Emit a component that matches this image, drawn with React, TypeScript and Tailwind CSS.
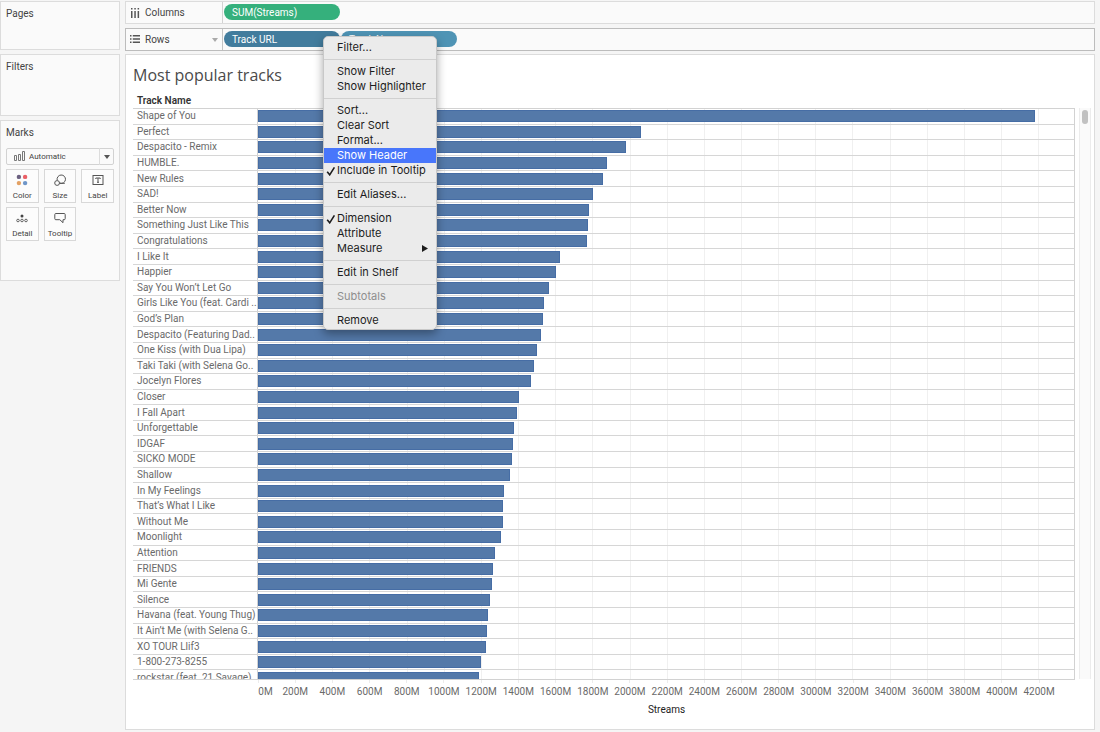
import React, { useState } from 'react';

const tracks = [
  { name: 'Shape of You', streams: 4182 },
  { name: 'Perfect', streams: 2060 },
  { name: 'Despacito - Remix', streams: 1980 },
  { name: 'HUMBLE.', streams: 1877 },
  { name: 'New Rules', streams: 1858 },
  { name: 'SAD!', streams: 1803 },
  { name: 'Better Now', streams: 1783 },
  { name: 'Something Just Like This', streams: 1778 },
  { name: 'Congratulations', streams: 1770 },
  { name: 'I Like It', streams: 1627 },
  { name: 'Happier', streams: 1606 },
  { name: 'Say You Won’t Let Go', streams: 1568 },
  { name: 'Girls Like You (feat. Cardi ..', streams: 1539 },
  { name: 'God’s Plan', streams: 1535 },
  { name: 'Despacito (Featuring Dad..', streams: 1522 },
  { name: 'One Kiss (with Dua Lipa)', streams: 1501 },
  { name: 'Taki Taki (with Selena Go..', streams: 1485 },
  { name: 'Jocelyn Flores', streams: 1468 },
  { name: 'Closer', streams: 1404 },
  { name: 'I Fall Apart', streams: 1393 },
  { name: 'Unforgettable', streams: 1377 },
  { name: 'IDGAF', streams: 1372 },
  { name: 'SICKO MODE', streams: 1366 },
  { name: 'Shallow', streams: 1356 },
  { name: 'In My Feelings', streams: 1326 },
  { name: 'That’s What I Like', streams: 1321 },
  { name: 'Without Me', streams: 1318 },
  { name: 'Moonlight', streams: 1307 },
  { name: 'Attention', streams: 1275 },
  { name: 'FRIENDS', streams: 1267 },
  { name: 'Mi Gente', streams: 1259 },
  { name: 'Silence', streams: 1251 },
  { name: 'Havana (feat. Young Thug)', streams: 1237 },
  { name: 'It Ain’t Me (with Selena G..', streams: 1234 },
  { name: 'XO TOUR Llif3', streams: 1229 },
  { name: '1-800-273-8255', streams: 1202 },
  { name: 'rockstar (feat. 21 Savage)', streams: 1191 },
];

// axis range in millions
const AXIS_MAX = 4393;
const ticks = Array.from({ length: 22 }, (_, i) => i * 200);
const pct = (value: number) => `${(value / AXIS_MAX) * 100}%`;

type MenuEntry = { label: string; checked?: boolean; disabled?: boolean; submenu?: boolean };

const menuGroups: MenuEntry[][] = [
  [{ label: 'Filter...' }],
  [{ label: 'Show Filter' }, { label: 'Show Highlighter' }],
  [
    { label: 'Sort...' },
    { label: 'Clear Sort' },
    { label: 'Format...' },
    { label: 'Show Header' },
    { label: 'Include in Tooltip', checked: true },
  ],
  [{ label: 'Edit Aliases...' }],
  [{ label: 'Dimension', checked: true }, { label: 'Attribute' }, { label: 'Measure', submenu: true }],
  [{ label: 'Edit in Shelf' }],
  [{ label: 'Subtotals', disabled: true }],
  [{ label: 'Remove' }],
];

const ContextMenu = () => {
  const [active, setActive] = useState('Show Header');

  return (
    <div
      role="menu"
      className="absolute left-[99px] top-[5px] z-20 w-[114px] rounded-[5px] border border-[#c8c8c8] bg-[#ebebeb] pt-[3px] pb-px font-['Inter',sans-serif] text-[11px] shadow-[0_4px_10px_rgba(0,0,0,0.35)]"
    >
      {menuGroups.map((group, i) => (
        <div key={i}>
          {i > 0 && <div className="my-[4px] h-px bg-[#d0d0d0]" />}
          {group.map((item) => (
            <button
              key={item.label}
              role="menuitem"
              disabled={item.disabled}
              onMouseEnter={() => setActive(item.label)}
              className={`flex h-[15px] w-full items-center pr-[8px] text-left whitespace-nowrap ${
                item.disabled ? 'text-[#8e8e8e]' : active === item.label ? 'bg-[#4876fb] text-white' : 'text-[#1c1c1c]'
              }`}
            >
              <span className="flex w-[13px] shrink-0 justify-center">
                {item.checked && (
                  <svg viewBox="0 0 10 10" className="h-[10px] w-[10px]" fill="none" stroke="currentColor" strokeWidth="1.6">
                    <path d="M1.2 5.8 3.7 8.8 8.4 1.3" />
                  </svg>
                )}
              </span>
              <span className="flex-1">{item.label}</span>
              {item.submenu && (
                <svg viewBox="0 0 6 7" className="h-[7px] w-[6px]" fill="currentColor">
                  <path d="M0 0 6 3.5 0 7z" />
                </svg>
              )}
            </button>
          ))}
        </div>
      ))}
    </div>
  );
};

const ColumnsIcon = () => (
  <svg viewBox="0 0 10 10" className="h-[10px] w-[10px]" fill="#555">
    <path d="M1 0h1.5v1.5H1zM1 3h1.5v7H1zM4.3 0h1.5v1.5H4.3zM4.3 3h1.5v7H4.3zM7.6 0h1.5v1.5H7.6zM7.6 3h1.5v7H7.6z" />
  </svg>
);

const RowsIcon = () => (
  <svg viewBox="0 0 10 10" className="h-[10px] w-[10px]" fill="#555">
    <path d="M0 0h1.5v1.5H0zM2.8 0H10v1.5H2.8zM0 3.2h1.5v1.5H0zM2.8 3.2H10v1.5H2.8zM0 6.4h1.5v1.5H0zM2.8 6.4H10v1.5H2.8z" />
  </svg>
);

const markButtons = [
  {
    label: 'Color',
    icon: (
      <>
        <circle cx="4.9" cy="4.9" r="2.2" fill="#6b6080" />
        <circle cx="11.1" cy="4.9" r="2.2" fill="#ea5f66" />
        <circle cx="4.9" cy="11.1" r="2.2" fill="#e3a164" />
        <circle cx="11.1" cy="11.1" r="2.2" fill="#6f96c8" />
      </>
    ),
  },
  {
    label: 'Size',
    icon: (
      <g fill="none" stroke="#555">
        <path d="M5.2 8.2A4.2 4.2 0 1 1 8 11.2" />
        <path d="M7.6 11.3h5.2" />
        <circle cx="5.1" cy="11" r="2.4" />
      </g>
    ),
  },
  {
    label: 'Label',
    icon: (
      <g fill="none" stroke="#555">
        <rect x="3" y="3.5" width="10" height="9" />
        <path d="M5.8 7V6h4.4v1M8 6v4.2M7 10.3h2" />
      </g>
    ),
  },
  {
    label: 'Detail',
    icon: (
      <>
        <circle cx="8" cy="6" r="1.5" fill="#444" />
        <g fill="none" stroke="#555" strokeWidth="0.9">
          <circle cx="4" cy="10.5" r="1.3" />
          <circle cx="8" cy="10.5" r="1.3" />
          <circle cx="12" cy="10.5" r="1.3" />
        </g>
      </>
    ),
  },
  {
    label: 'Tooltip',
    icon: (
      <path
        d="M3.8 3.5h8.4q1 0 1 1v4.2q0 1-1 1H11v3L7.8 9.7h-4q-1 0-1-1V4.5q0-1 1-1z"
        fill="none"
        stroke="#555"
      />
    ),
  },
];

const Sidebar = () => (
  <aside className="flex w-[120px] shrink-0 flex-col text-[10px] leading-[14px]">
    <section className="h-[49px] border border-[#dcdcdc] bg-[#fafafa] px-[5px] py-[5px]">Pages</section>
    <section className="mt-[4px] h-[62px] border border-[#dcdcdc] bg-[#fafafa] px-[5px] py-[5px]">Filters</section>
    <section className="mt-[4px] h-[161px] border border-[#dcdcdc] bg-[#fafafa] px-[5px] py-[5px]">
      <h2>Marks</h2>
      <div className="relative mt-[8px]">
        <select
          aria-label="Mark type"
          className="block h-[17px] w-full appearance-none rounded-[2px] border border-[#d2d2d2] bg-[#fafafa] pl-[22px] text-[8px] leading-[14px]"
        >
          <option>Automatic</option>
        </select>
        <svg viewBox="0 0 12 10" className="pointer-events-none absolute top-[3px] left-[8px] h-[10px] w-[12px]" fill="none" stroke="#777">
          <path d="M.5 4.5h2v5h-2zM4.5 3.5h2v6h-2zM8.5.5h2v9h-2z" />
        </svg>
        <span className="pointer-events-none absolute inset-y-0 right-0 flex w-[15px] items-center justify-center border-l border-[#dcdcdc]">
          <svg viewBox="0 0 6 4" className="h-[4px] w-[6px]" fill="#555">
            <path d="M0 0h6L3 4z" />
          </svg>
        </span>
      </div>
      <div className="mt-[4px] grid grid-cols-3 gap-x-[5px] gap-y-[4px]">
        {markButtons.map((mark) => (
          <button
            key={mark.label}
            className="flex h-[34px] flex-col items-center border border-[#d8d8d8] bg-[#fcfcfc] pt-[2px] text-[8px] leading-[12px]"
          >
            <svg viewBox="0 0 16 16" className="h-[16px] w-[16px] shrink-0">
              {mark.icon}
            </svg>
            <span className="mt-[2px]">{mark.label}</span>
          </button>
        ))}
      </div>
    </section>
  </aside>
);

const Shelves = () => (
  <>
    <div className="flex h-[23px] border border-[#dcdcdc] bg-[#fafafa]">
      <div className="flex w-[97px] shrink-0 items-center gap-[5px] border-r border-[#d2d2d2] pl-[4px] text-[10px]">
        <ColumnsIcon />
        Columns
      </div>
      <div className="flex items-start pt-[2px] pl-[1px]">
        <button className="h-[16px] w-[116px] rounded-full bg-[#35b07c] pl-[8px] text-left text-[10px] leading-[18px] text-white">
          SUM(Streams)
        </button>
      </div>
    </div>

    <div className="mt-[4px] flex h-[23px] border border-[#bcbcbc] bg-[#fafafa]">
      <div className="flex w-[97px] shrink-0 items-center gap-[5px] border-r border-[#c4c4c4] pr-[4px] pl-[4px] text-[10px]">
        <RowsIcon />
        <span className="flex-1">Rows</span>
        <svg viewBox="0 0 6 4" className="h-[4px] w-[6px]" fill="#aaa">
          <path d="M0 0h6L3 4z" />
        </svg>
      </div>
      <div className="flex items-start gap-[1px] pt-[2px] pl-[1px]">
        <div className="relative">
          <button className="block h-[16px] w-[116px] rounded-full bg-[#427c9d] pl-[8px] text-left text-[10px] leading-[18px] text-white">
            Track URL
          </button>
          <ContextMenu />
        </div>
        <button className="h-[16px] w-[116px] rounded-full bg-[#4f94b5] pl-[8px] text-left text-[10px] leading-[18px] text-white">
          Track Name
        </button>
      </div>
    </div>
  </>
);

const Chart = () => (
  <div className="flex">
    <div className="min-w-0 flex-1">
      <div className="relative h-[572px] overflow-hidden border-y border-r border-[#d2d2d2]">
        {/* vertical grid lines sit behind the bars */}
        <div className="absolute inset-y-0 right-0 left-[124px] border-l border-[#d2d2d2]">
          {ticks.slice(1).map((t) => (
            <div key={t} className="absolute inset-y-0 w-px bg-[#f0f0f0]" style={{ left: pct(t) }} />
          ))}
        </div>
        <div className="relative grid h-[577px] auto-rows-fr">
          {tracks.map((track) => (
            <div key={track.name} className="flex min-h-0 items-center border-b border-[#d6d6d6]">
              <span className="w-[125px] shrink-0 pl-[4px] text-[10px] leading-[14px] whitespace-nowrap text-[#6a6a6a]">
                {track.name}
              </span>
              <div className="flex-1">
                <div className="h-[12px] border border-[#466da5] bg-[#5479a9]" style={{ width: pct(track.streams) }} />
              </div>
            </div>
          ))}
        </div>
      </div>

      {/* x axis */}
      <div className="relative ml-[125px] h-[20px] text-[10px] leading-[14px] text-[#6a6a6a]">
        {ticks.map((t) => (
          <div key={t} className="absolute top-0 flex w-0 flex-col items-center" style={{ left: pct(t) }}>
            <div className="h-[3px] w-px bg-[#ececec]" />
            <span className={t === 0 ? 'mt-[2px] ml-[15px]' : 'mt-[2px]'}>{t}M</span>
          </div>
        ))}
      </div>
      <div className="mt-[3px] ml-[125px] text-center text-[10px] leading-[14px] text-[#222]">Streams</div>
    </div>

    <div className="ml-[4px] h-[571px] w-[12px] shrink-0 border-x border-[#ececec] bg-[#fafafa] px-[2px] pt-[2px]">
      <div className="mx-auto h-[14px] w-[6px] rounded-full bg-[#c1c1c1]" />
    </div>
  </div>
);

const App = () => {
  return (
    <div className="flex min-h-screen gap-[5px] bg-[#f5f5f5] pt-[1px] pr-[5px] pb-[2px] font-['Roboto','Open_Sans',sans-serif] text-[#444]">
      <Sidebar />
      <main className="flex min-w-0 flex-1 flex-col">
        <Shelves />
        <section className="mt-[3px] flex-1 border border-[#dcdcdc] bg-white pt-[9px] pr-[3px] pl-[7px]">
          <h1 className="font-['Open_Sans',sans-serif] text-[16px] leading-[22px] text-[#4a4a4a]">Most popular tracks</h1>
          <div className="mt-[8px] pl-[4px] text-[10px] leading-[14px] font-semibold text-[#333]">Track Name</div>
          <Chart />
        </section>
      </main>
    </div>
  );
};

export default App;
